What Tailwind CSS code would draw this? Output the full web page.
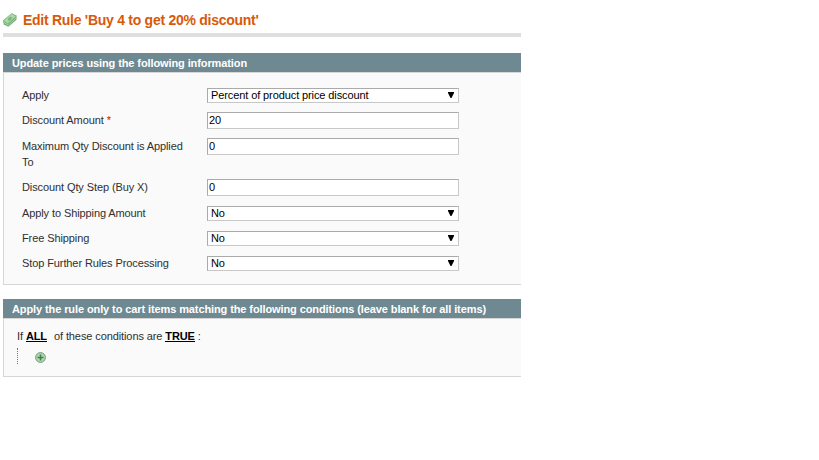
<!DOCTYPE html>
<html lang="en">
<head>
    <meta charset="UTF-8">
    <meta name="viewport" content="width=device-width, initial-scale=1.0">
    <title>Edit Rule</title>
    <script src="https://cdn.jsdelivr.net/npm/@tailwindcss/browser@4"></script>
</head>
<body class="bg-white font-['Liberation_Sans',Arial,sans-serif] text-[11px] leading-4 tracking-[-0.1px] text-[#2f2f2f]">
    <div class="w-[521px] pl-[3px] pt-2">
        <div class="flex h-[29px] items-start border-b-4 border-[#dfdfdf]">
            <svg class="mt-[5px] h-[14px] w-[14px] shrink-0" viewBox="0 0 14 14">
                <path d="M0 7.6L8.8 0.5L13.5 2.6V6.8L5.4 13.8L0.8 11.4Z" fill="#6fa873"/>
                <path d="M0.3 7.6L8.8 0.6L13.3 3.2L4.8 10.8Z" fill="#a9d8a6" stroke="#85bd86" stroke-width="0.7"/>
                <ellipse cx="6.9" cy="5.7" rx="2.4" ry="1.5" fill="#78b77c" transform="rotate(-40 6.9 5.7)"/>
                <path d="M0.8 9.4L5.2 12.2L13.4 5" fill="none" stroke="#b9dfb6" stroke-width="0.8"/>
            </svg>
            <h3 class="ml-[6px] whitespace-nowrap pt-1 text-[14px] font-bold tracking-[-0.27px] text-[#d85909]">Edit Rule 'Buy 4 to get 20% discount'</h3>
        </div>

        <div class="mt-4">
            <h4 class="h-[19px] bg-[#6f8992] pl-[9px] pt-[2px] text-[11px] font-bold whitespace-nowrap text-white">Update prices using the following information</h4>
            <div class="h-[213px] border border-r-0 border-[#d6d6d6] bg-[#fafafa] pl-[18px] pt-[15px]">
                <div class="flex h-6">
                    <label class="-mt-px w-[185px] shrink-0">Apply</label>
                    <div class="relative h-[15px] w-[252px]">
                        <select class="block h-[15px] w-full appearance-none border border-[#c8c8c8] border-t-[#aaa] border-l-[#aaa] bg-white pl-[3px] text-[11px] leading-[13px] tracking-[-0.1px] text-black"><option>Percent of product price discount</option></select>
                        <svg class="absolute top-1 right-[5px] h-[6px] w-[6px]" viewBox="0 0 6 6"><path d="M0 0H6V1L3.5 6H2.5L0 1Z"/></svg>
                    </div>
                </div>
                <div class="flex h-[26px]">
                    <label class="w-[185px] shrink-0">Discount Amount <span class="text-[#d40707]">*</span></label>
                    <input type="text" value="20" class="h-[17px] w-[252px] border border-[#c8c8c8] border-t-[#aaa] border-l-[#aaa] bg-white px-px pb-[2px] text-[11px] leading-[13px] text-black">
                </div>
                <div class="flex h-[41px]">
                    <label class="w-[185px] shrink-0 pr-5">Maximum Qty Discount is Applied To</label>
                    <input type="text" value="0" class="h-[17px] w-[252px] border border-[#c8c8c8] border-t-[#aaa] border-l-[#aaa] bg-white px-px pb-[2px] text-[11px] leading-[13px] text-black">
                </div>
                <div class="flex h-[27px]">
                    <label class="w-[185px] shrink-0">Discount Qty Step (Buy X)</label>
                    <input type="text" value="0" class="h-[17px] w-[252px] border border-[#c8c8c8] border-t-[#aaa] border-l-[#aaa] bg-white px-px pb-[2px] text-[11px] leading-[13px] text-black">
                </div>
                <div class="flex h-[25px]">
                    <label class="-mt-px w-[185px] shrink-0">Apply to Shipping Amount</label>
                    <div class="relative h-[15px] w-[252px]">
                        <select class="block h-[15px] w-full appearance-none border border-[#c8c8c8] border-t-[#aaa] border-l-[#aaa] bg-white pl-[3px] text-[11px] leading-[13px] text-black"><option>No</option></select>
                        <svg class="absolute top-1 right-[5px] h-[6px] w-[6px]" viewBox="0 0 6 6"><path d="M0 0H6V1L3.5 6H2.5L0 1Z"/></svg>
                    </div>
                </div>
                <div class="flex h-[25px]">
                    <label class="-mt-px w-[185px] shrink-0">Free Shipping</label>
                    <div class="relative h-[15px] w-[252px]">
                        <select class="block h-[15px] w-full appearance-none border border-[#c8c8c8] border-t-[#aaa] border-l-[#aaa] bg-white pl-[3px] text-[11px] leading-[13px] text-black"><option>No</option></select>
                        <svg class="absolute top-1 right-[5px] h-[6px] w-[6px]" viewBox="0 0 6 6"><path d="M0 0H6V1L3.5 6H2.5L0 1Z"/></svg>
                    </div>
                </div>
                <div class="flex h-[25px]">
                    <label class="-mt-px w-[185px] shrink-0">Stop Further Rules Processing</label>
                    <div class="relative h-[15px] w-[252px]">
                        <select class="block h-[15px] w-full appearance-none border border-[#c8c8c8] border-t-[#aaa] border-l-[#aaa] bg-white pl-[3px] text-[11px] leading-[13px] text-black"><option>No</option></select>
                        <svg class="absolute top-1 right-[5px] h-[6px] w-[6px]" viewBox="0 0 6 6"><path d="M0 0H6V1L3.5 6H2.5L0 1Z"/></svg>
                    </div>
                </div>
            </div>
        </div>

        <div class="mt-[14px]">
            <h4 class="h-[19px] bg-[#6f8992] pl-[9px] pt-[2px] text-[11px] font-bold whitespace-nowrap text-white">Apply the rule only to cart items matching the following conditions (leave blank for all items)</h4>
            <div class="h-[59px] border border-r-0 border-[#d6d6d6] bg-[#fafafa] pl-[13px] pt-[9px]">
                <div class="flex whitespace-pre">
                    <span>If </span><a class="h-[14px] border-b border-black font-bold text-black">ALL</a><span class="ml-[7px]">of these conditions are </span><a class="h-[14px] border-b border-black font-bold text-black">TRUE</a><span> :</span>
                </div>
                <div class="mt-1 flex h-4 border-l border-dotted border-[#777] pl-[17px]">
                    <svg class="mt-[4px] h-[11px] w-[11px]" viewBox="0 0 11 11">
                        <circle cx="5.5" cy="5.5" r="4.9" fill="#b2d6b2" stroke="#739a77" stroke-width="1"/>
                        <path d="M5.5 2.5V8.5M2.5 5.5H8.5" stroke="#3c8549" stroke-width="1.6"/>
                    </svg>
                </div>
            </div>
        </div>
    </div>
</body>
</html>
